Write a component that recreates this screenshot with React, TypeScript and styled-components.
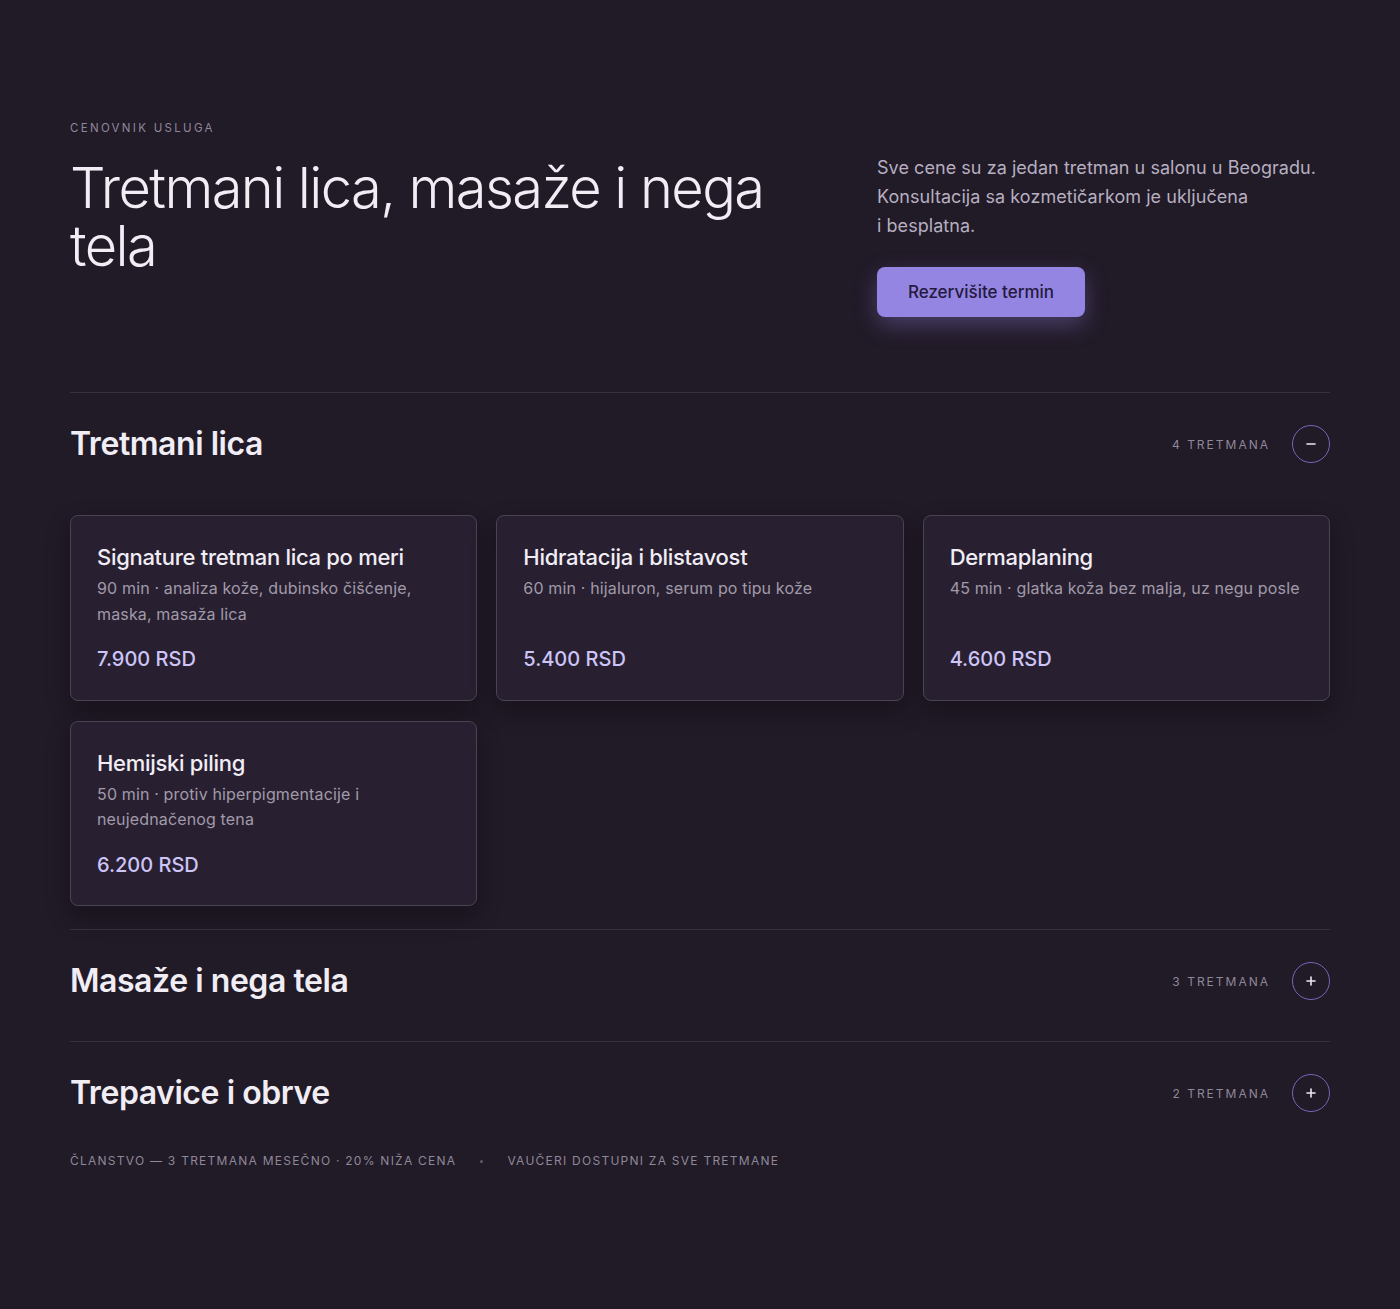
import React from "react";
import styled, { createGlobalStyle } from "styled-components";

const Global = createGlobalStyle`
  html, body { margin: 0; padding: 0; background: #211a27; }
  body { font-family: Inter, "Noto Sans", sans-serif; color: #efeaf3; -webkit-font-smoothing: antialiased; }
  * { box-sizing: border-box; }
`;

const Page = styled.main`
  min-height: 1309px;
  padding: 120px 70px 120px;
`;

const Hero = styled.header`
  display: grid;
  grid-template-columns: 1fr 453px;
  column-gap: 54px;
  padding-bottom: 75px;
  border-bottom: 1px solid #37303e;
`;

const Eyebrow = styled.div`
  font-size: 11.5px;
  line-height: 16px;
  letter-spacing: 2.3px;
  text-transform: uppercase;
  color: #8f8899;
`;

const Title = styled.h1`
  margin: 23px 0 0;
  font-size: 56px;
  line-height: 58px;
  font-weight: 300;
  letter-spacing: -1.6px;
  color: #f1edf5;
`;

const Aside = styled.div`
  padding-top: 33px;
`;

const Lead = styled.p`
  margin: 0;
  font-size: 18px;
  line-height: 29px;
  letter-spacing: 0.05px;
  color: #b6afc0;
`;

const CTA = styled.button`
  margin-top: 27px;
  width: 208px;
  height: 50px;
  border: 0;
  border-radius: 8px;
  background: #9585e2;
  color: #241a3d;
  font-family: inherit;
  font-size: 17px;
  font-weight: 500;
  box-shadow: 0 8px 22px rgba(149, 133, 226, 0.35);
  cursor: pointer;
`;

const Section = styled.section<{ $last?: boolean }>`
  border-bottom: ${(p) => (p.$last ? "none" : "1px solid #37303e")};
`;

const SectionHead = styled.div`
  display: flex;
  align-items: center;
  justify-content: space-between;
  padding: 32px 0 41px;
`;

const SectionTitle = styled.h2`
  margin: 0;
  font-size: 32px;
  line-height: 38px;
  font-weight: 600;
  letter-spacing: -0.45px;
  color: #f1edf5;
`;

const HeadRight = styled.div`
  display: flex;
  align-items: center;
  gap: 22px;
`;

const Count = styled.span`
  font-size: 12px;
  letter-spacing: 2px;
  text-transform: uppercase;
  color: #8f8899;
`;

const Toggle = styled.button`
  width: 38px;
  height: 38px;
  border-radius: 50%;
  border: 1.5px solid #7667b8;
  background: transparent;
  display: flex;
  align-items: center;
  justify-content: center;
  padding: 0;
  cursor: pointer;
`;

const Grid = styled.div`
  display: grid;
  grid-template-columns: repeat(3, 1fr);
  gap: 20px 19px;
  margin-top: 11px;
  padding-bottom: 23px;
`;

const Card = styled.article`
  display: flex;
  flex-direction: column;
  padding: 28px 26px 26.5px;
  background: #282030;
  border: 1px solid #4a4352;
  border-radius: 8px;
  box-shadow: 0 10px 24px rgba(0, 0, 0, 0.3);
`;

const CardTitle = styled.h3`
  margin: 0;
  font-size: 22px;
  line-height: 26px;
  font-weight: 500;
  letter-spacing: -0.3px;
  color: #f1edf5;
`;

const CardDesc = styled.p`
  margin: 6px 0 0;
  font-size: 16px;
  line-height: 25.6px;
  letter-spacing: 0.15px;
  color: #a19aaa;
`;

const Price = styled.div`
  margin-top: auto;
  padding-top: 18px;
  font-size: 20px;
  line-height: 28px;
  font-weight: 500;
  color: #cdc4f7;
`;

const Footer = styled.footer`
  display: flex;
  align-items: center;
  gap: 24px;
  font-size: 12px;
  line-height: 16px;
  letter-spacing: 1.25px;
  text-transform: uppercase;
  color: #8f8899;
`;

const Dot = styled.span`
  width: 3px;
  height: 3px;
  border-radius: 50%;
  background: #5f5868;
`;

const Icon = ({ plus }: { plus?: boolean }) => (
  <svg width="12" height="12" viewBox="0 0 12 12" fill="none" stroke="#ece7f6" strokeWidth="1.6" strokeLinecap="round">
    <line x1="2" y1="6" x2="10" y2="6" />
    {plus && <line x1="6" y1="2" x2="6" y2="10" />}
  </svg>
);

const treatments = [
  { t: "Signature tretman lica po meri", d: "90 min · analiza kože, dubinsko čišćenje, maska, masaža lica", p: "7.900 RSD" },
  { t: "Hidratacija i blistavost", d: "60 min · hijaluron, serum po tipu kože", p: "5.400 RSD" },
  { t: "Dermaplaning", d: "45 min · glatka koža bez malja, uz negu posle", p: "4.600 RSD" },
  { t: "Hemijski piling", d: "50 min · protiv hiperpigmentacije i neujednačenog tena", p: "6.200 RSD" },
];

export default function App() {
  return (
    <>
      <Global />
      <Page>
        <Hero>
          <div>
            <Eyebrow>Cenovnik usluga</Eyebrow>
            <Title>Tretmani lica, masaže i nega tela</Title>
          </div>
          <Aside>
            <Lead>
              Sve cene su za jedan tretman u salonu u Beogradu.
              <br />
              Konsultacija sa kozmetičarkom je uključena
              <br />i besplatna.
            </Lead>
            <CTA>Rezervišite termin</CTA>
          </Aside>
        </Hero>

        <Section>
          <SectionHead>
            <SectionTitle>Tretmani lica</SectionTitle>
            <HeadRight>
              <Count>4 tretmana</Count>
              <Toggle aria-label="Sakrij">
                <Icon />
              </Toggle>
            </HeadRight>
          </SectionHead>
          <Grid>
            {treatments.map((x) => (
              <Card key={x.t}>
                <CardTitle>{x.t}</CardTitle>
                <CardDesc>{x.d}</CardDesc>
                <Price>{x.p}</Price>
              </Card>
            ))}
          </Grid>
        </Section>

        <Section>
          <SectionHead>
            <SectionTitle>Masaže i nega tela</SectionTitle>
            <HeadRight>
              <Count>3 tretmana</Count>
              <Toggle aria-label="Prikaži">
                <Icon plus />
              </Toggle>
            </HeadRight>
          </SectionHead>
        </Section>

        <Section $last>
          <SectionHead>
            <SectionTitle>Trepavice i obrve</SectionTitle>
            <HeadRight>
              <Count>2 tretmana</Count>
              <Toggle aria-label="Prikaži">
                <Icon plus />
              </Toggle>
            </HeadRight>
          </SectionHead>
        </Section>

        <Footer>
          <span>Članstvo — 3 tretmana mesečno · 20% niža cena</span>
          <Dot />
          <span>Vaučeri dostupni za sve tretmane</span>
        </Footer>
      </Page>
    </>
  );
}
